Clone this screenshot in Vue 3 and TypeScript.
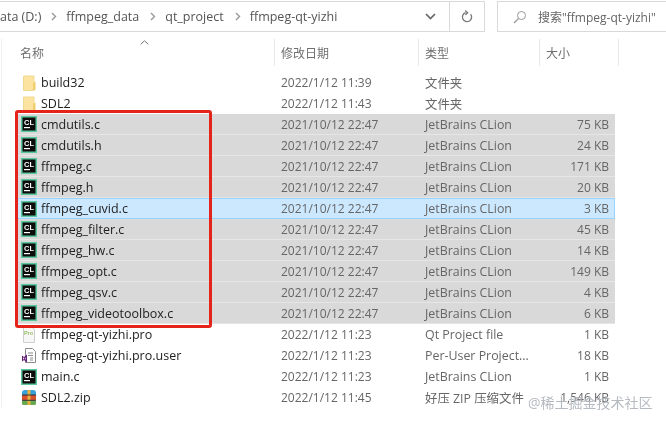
<script setup lang="ts">
interface Row { name: string; date: string; type: string; size: string; icon: 'folder' | 'cl' | 'pro' | 'user' | 'zip'; state?: 'sel' | 'focus' }
const p = '2021/10/12 22:47'
const jb = 'JetBrains CLion'
const rows: Row[] = [
  { name: 'build32', date: '2022/1/12 11:39', type: '文件夹', size: '', icon: 'folder' },
  { name: 'SDL2', date: '2022/1/12 11:43', type: '文件夹', size: '', icon: 'folder' },
  { name: 'cmdutils.c', date: p, type: jb, size: '75 KB', icon: 'cl', state: 'sel' },
  { name: 'cmdutils.h', date: p, type: jb, size: '24 KB', icon: 'cl', state: 'sel' },
  { name: 'ffmpeg.c', date: p, type: jb, size: '171 KB', icon: 'cl', state: 'sel' },
  { name: 'ffmpeg.h', date: p, type: jb, size: '20 KB', icon: 'cl', state: 'sel' },
  { name: 'ffmpeg_cuvid.c', date: p, type: jb, size: '3 KB', icon: 'cl', state: 'focus' },
  { name: 'ffmpeg_filter.c', date: p, type: jb, size: '45 KB', icon: 'cl', state: 'sel' },
  { name: 'ffmpeg_hw.c', date: p, type: jb, size: '14 KB', icon: 'cl', state: 'sel' },
  { name: 'ffmpeg_opt.c', date: p, type: jb, size: '149 KB', icon: 'cl', state: 'sel' },
  { name: 'ffmpeg_qsv.c', date: p, type: jb, size: '4 KB', icon: 'cl', state: 'sel' },
  { name: 'ffmpeg_videotoolbox.c', date: p, type: jb, size: '6 KB', icon: 'cl', state: 'sel' },
  { name: 'ffmpeg-qt-yizhi.pro', date: '2022/1/12 11:23', type: 'Qt Project file', size: '1 KB', icon: 'pro' },
  { name: 'ffmpeg-qt-yizhi.pro.user', date: '2022/1/12 11:23', type: 'Per-User Project...', size: '18 KB', icon: 'user' },
  { name: 'main.c', date: '2022/1/12 11:23', type: jb, size: '1 KB', icon: 'cl' },
  { name: 'SDL2.zip', date: '2022/1/12 11:45', type: '好压 ZIP 压缩文件', size: '1,546 KB', icon: 'zip' },
]
const crumbs = ['ffmpeg_data', 'qt_project', 'ffmpeg-qt-yizhi']
</script>

<template>
  <div class="win">
    <div class="top">
      <div class="addr">
        <span class="drive">ata (D:)</span>
        <template v-for="c in crumbs" :key="c">
          <svg class="sep" width="6" height="9" viewBox="0 0 6 9"><path d="M1 1l3.500 3.500L1 8" fill="none" stroke="#999" stroke-width="1.400" /></svg>
          <span class="crumb">{{ c }}</span>
        </template>
        <span class="grow"></span>
        <svg class="drop" width="11" height="7" viewBox="0 0 11 7"><path d="M1 1l4.500 4.500L10 1" fill="none" stroke="#666" stroke-width="1.700" /></svg>
        <div class="refresh">
          <svg width="12" height="14" viewBox="0 0 12 14"><path d="M9.600 4.200A4.600 4.600 0 1 1 4.600 2.700M4.200 .6 6.600 2.700 4.400 4.800" fill="none" stroke="#777" stroke-width="1.300" /></svg>
        </div>
      </div>
      <div class="search">
        <svg width="14" height="14" viewBox="0 0 14 14"><circle cx="8.500" cy="5.500" r="4" fill="none" stroke="#999" stroke-width="1" /><path d="M5.500 8.500 1 13" stroke="#999" stroke-width="1.200" /></svg>
        <span>搜索"ffmpeg-qt-yizhi"</span>
      </div>
    </div>

    <div class="panel">
      <div class="head">
        <svg class="sort" width="9" height="5" viewBox="0 0 9 5"><path d="M.7 4.300 4.500 .8l3.800 3.500" fill="none" stroke="#777" stroke-width="1" /></svg>
        <div class="hc h1">名称</div>
        <div class="hc h2">修改日期</div>
        <div class="hc h3">类型</div>
        <div class="hc h4">大小</div>
      </div>

      <div class="list">
        <div v-for="r in rows" :key="r.name" class="row" :class="r.state">
          <div class="name">
            <svg v-if="r.icon === 'folder'" class="ic" width="16" height="16" viewBox="0 0 16 16">
              <path d="M2.500 1h10.500v14.500H2.500z" fill="#fce4a0" stroke="#f1d98f" stroke-width="1" />
              <path d="M12 15V8l2.500-1.500V15z" fill="#f2cd6c" />
            </svg>
            <svg v-else-if="r.icon === 'cl'" class="ic" width="16" height="16" viewBox="0 0 16 16">
              <rect x="0" y="0" width="16" height="16" fill="#5ac79f" />
              <rect x="1.500" y="1.500" width="13" height="13" fill="#0c0c0c" />
              <text x="3" y="8.600" class="cl">CL</text>
              <rect x="3" y="11" width="6" height="1.200" fill="#fff" />
            </svg>
            <svg v-else-if="r.icon === 'pro'" class="ic" width="16" height="16" viewBox="0 0 16 16">
              <path d="M2.500 .5h9l2 2v13h-11z" fill="#f7f7f7" stroke="#cfcfcf" />
              <text x="3" y="8" class="pro">Pro</text>
            </svg>
            <svg v-else-if="r.icon === 'user'" class="ic" width="16" height="16" viewBox="0 0 16 16">
              <path d="M4.500 .5h7l3 3v11h-10z" fill="#fff" stroke="#8a8a8a" />
              <path d="M7 5h5M7 7.500h5M9 10h3M9 12h3" stroke="#8a8a8a" stroke-width="1" />
              <path d="M1 7.500 3 9l3-2.500v8L3 12l-2 1.500z" fill="#68217a" />
              <path d="M2 9.200v2.600L3.200 10.500zM4.500 9v3L3.700 10.500z" fill="#fff" />
            </svg>
            <svg v-else class="ic" width="16" height="16" viewBox="0 0 16 16">
              <path d="M1 3q0-3 3-3h8q3 0 3 3v2H1z" fill="#39a0d8" />
              <rect x="1" y="5" width="14" height="5" fill="#d9502e" />
              <rect x="1" y="10" width="14" height="5" rx="1.500" fill="#6aa84f" />
              <rect x="6.500" y="0" width="3" height="15" fill="#e9b13c" />
              <rect x="1" y="4.500" width="14" height="1" fill="#333" />
              <rect x="1" y="9.800" width="14" height="1" fill="#333" />
            </svg>
            <span class="fname">{{ r.name }}</span>
          </div>
          <div class="date">{{ r.date }}</div>
          <div class="type">{{ r.type }}</div>
          <div class="size">{{ r.size }}</div>
        </div>
      </div>
      <div class="mark"></div>
      <div class="wm">@稀土掘金技术社区</div>
    </div>
  </div>
</template>

<style>
html, body { margin: 0; background: #fff; }
</style>

<style scoped>
.win {
  position: relative;
  width: 666px;
  height: 422px;
  overflow: hidden;
  background: #fff;
  font-family: "Open Sans", "Noto Sans CJK SC", sans-serif;
  font-size: 12px;
  color: #666;
  filter: blur(.3px);
}
.top {
  display: flex;
  gap: 12px;
  height: 31px;
  margin: 1px 0 0 -1px;
}
.addr {
  display: flex;
  align-items: center;
  width: 486px;
  box-sizing: border-box;
  border: 1px solid #d9d9d9;
  color: #555;
  font-size: 12.500px;
}
.drive { margin-right: 10px; }
.sep { margin-right: 9px; }
.crumb { margin-right: 11px; }
.grow { flex: 1; }
.drop { margin-right: 13px; }
.refresh {
  display: flex;
  align-items: center;
  justify-content: center;
  width: 34px;
  height: 100%;
  border-left: 1px solid #d9d9d9;
}
.search {
  display: flex;
  align-items: center;
  flex: 1;
  margin-right: -10px;
  padding-left: 15px;
  gap: 11px;
  border: 1px solid #d9d9d9;
  color: #666;
  font-size: 12px;
  white-space: nowrap;
}
.panel {
  position: relative;
  margin-left: 1px;
  border-left: 1px solid #f0f0f0;
  padding-left: 15px;
}
.head {
  position: relative;
  display: flex;
  height: 27px;
  margin-top: 7px;
  color: #6f6f6f;
  font-size: 12px;
}
.sort { position: absolute; left: 123px; top: 1px; }
.hc {
  box-sizing: border-box;
  height: 27px;
  line-height: 29px;
  padding-left: 6px;
  border-right: 1px solid #e8e8e8;
}
.h1 { width: 258px; padding-left: 3px; }
.h2 { width: 144px; }
.h3 { width: 121px; }
.h4 { width: 79px; }
.list { margin-top: 6px; }
.row {
  display: grid;
  grid-template-columns: 257px 144px 126px 65px;
  box-sizing: border-box;
  width: 598px;
  height: 21px;
  align-items: center;
  white-space: nowrap;
}
.row.sel { background: #d9d9d9; border-bottom: 1px solid #e6e6e6; }
.row.focus { background: #cce8ff; box-shadow: inset 0 0 0 1px #99d1ff; }
.name { display: flex; align-items: center; gap: 4px; padding-left: 4px; }
.ic { flex: none; }
.fname { color: #222; font-size: 12.500px; }
.date { padding-left: 7px; }
.type { padding-left: 7px; font-size: 12.400px; }
.size { text-align: right; }
.cl { font: 700 7.500px "Liberation Sans", sans-serif; fill: #fff; }
.pro { font: 700 5.500px "Liberation Sans", sans-serif; fill: #9bc06a; }
.mark {
  position: absolute;
  left: 13px;
  top: 71px;
  width: 197px;
  height: 218px;
  box-sizing: border-box;
  border: 3px solid #e4231b;
  border-radius: 3px;
}
.wm {
  position: absolute;
  left: 526px;
  top: 353px;
  font-size: 14px;
  color: rgba(120, 130, 140, .55);
  text-shadow: 0 0 1px #fff;
  white-space: nowrap;
}
</style>
